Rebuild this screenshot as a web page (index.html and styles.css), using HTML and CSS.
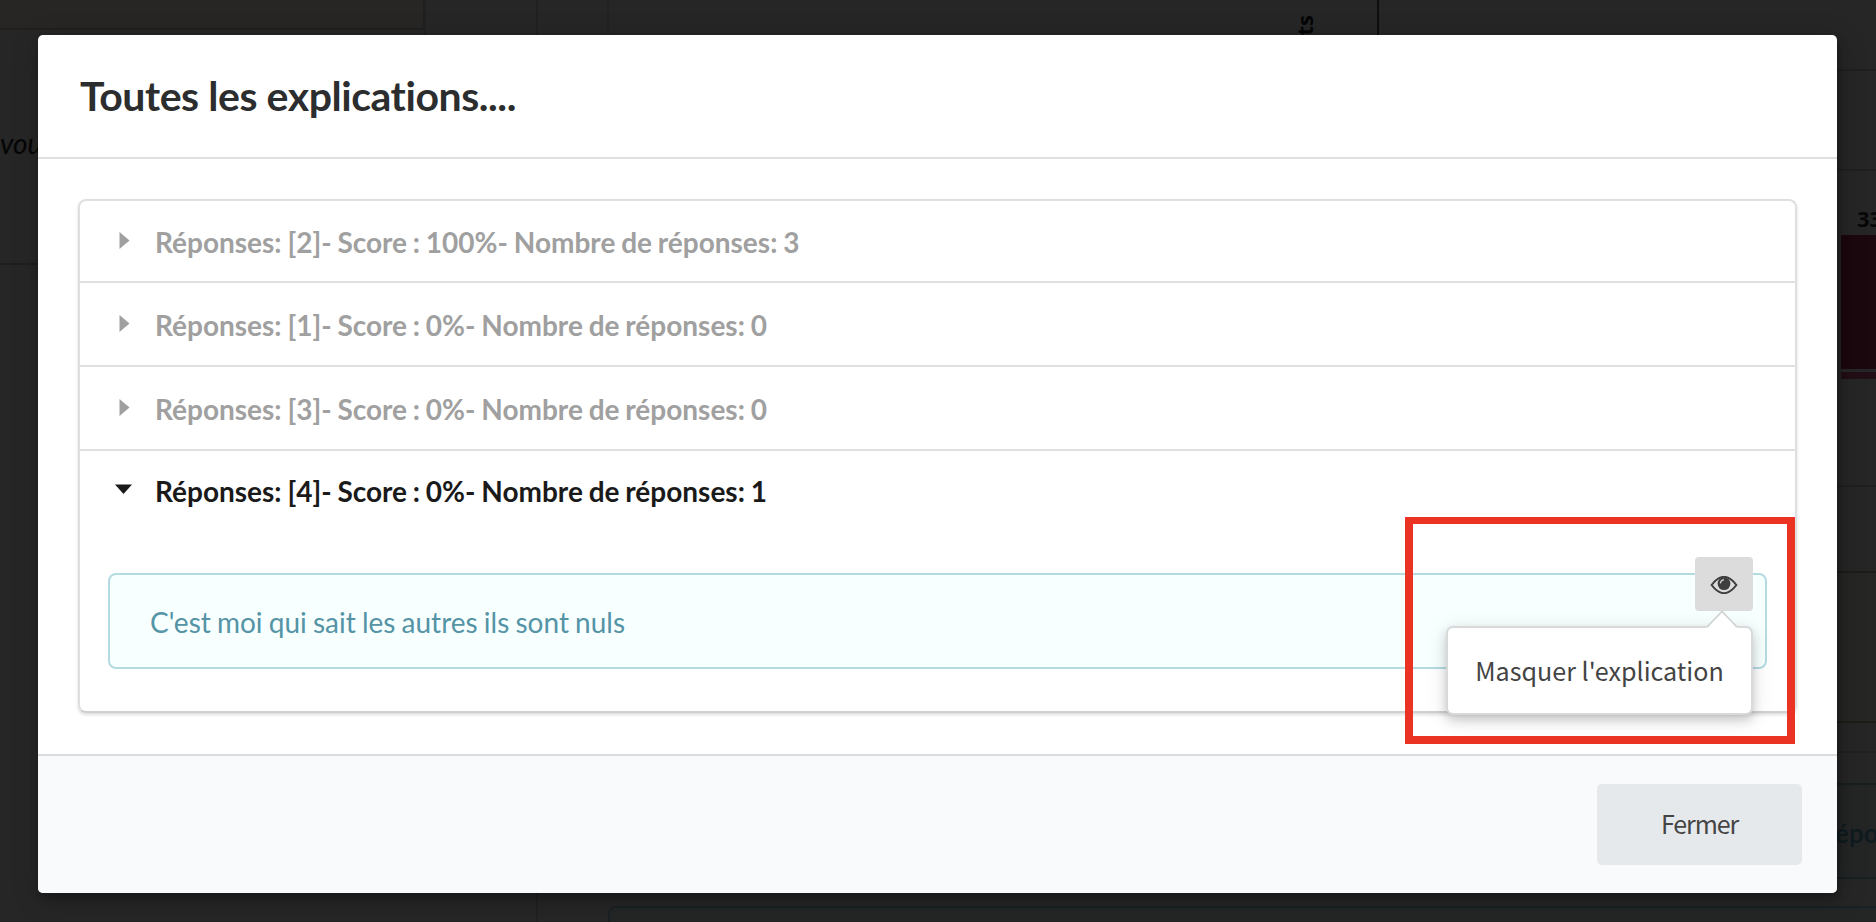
FILE: index.html
```html
<!DOCTYPE html>
<html lang="fr">
<head>
<meta charset="utf-8">
<title>Toutes les explications</title>
<link rel="stylesheet" href="styles.css">
</head>
<body>
<div class="page" aria-hidden="true">
  <div class="bg banner"></div>
  <div class="bg rule-left"></div>
  <div class="bg vline v1"></div>
  <div class="bg vline v2"></div>
  <div class="bg vline v3"></div>
  <div class="bg vline axis"></div>
  <div class="bg card-bottom"></div>
  <div class="bg rline r1"></div>
  <div class="bg rline r2"></div>
  <div class="bg rline r3"></div>
  <div class="bg warm"></div>
  <div class="bg rline r4"></div>
  <div class="bg cool"></div>
  <div class="bg bar"></div>
  <div class="bg bar-base"></div>
  <span class="bg word-left">vous</span>
  <span class="bg word-axis">ts</span>
  <span class="bg word-value">33</span>
  <span class="bg word-right">épo</span>
</div>
<div class="modal" role="dialog">
  <header class="header"><h1 class="title">Toutes les explications....</h1></header>
  <main class="content">
    <div class="accordion">
      <div class="row"><svg class="caret" viewBox="0 0 16 18"><path d="M3.5 1 L13.5 9.5 L3.5 18Z"/></svg><span>Réponses: [2]- Score : 100%- Nombre de réponses: 3</span></div>
      <div class="row"><svg class="caret" viewBox="0 0 16 18"><path d="M3.5 1 L13.5 9.5 L3.5 18Z"/></svg><span>Réponses: [1]- Score : 0%- Nombre de réponses: 0</span></div>
      <div class="row"><svg class="caret" viewBox="0 0 16 18"><path d="M3.5 1 L13.5 9.5 L3.5 18Z"/></svg><span>Réponses: [3]- Score : 0%- Nombre de réponses: 0</span></div>
      <div class="row active"><svg class="caret" viewBox="0 0 16 18"><path d="M-1 4.5 H16 L7.5 14Z"/></svg><span>Réponses: [4]- Score : 0%- Nombre de réponses: 1</span></div>
      <div class="message"><span class="message-text">C'est moi qui sait les autres ils sont nuls</span>
        <button class="eye"><svg viewBox="0 0 28 18"><path d="M1.6 9 Q14 -7.4 26.4 9 Q14 25.4 1.6 9Z" fill="none" stroke="#3f3f3f" stroke-width="2"/><circle cx="14" cy="7.6" r="6.4" fill="#3f3f3f"/><path d="M10.4 7.4 Q10.6 4 14 3.8" fill="none" stroke="#ddd" stroke-width="1.3"/></svg></button>
        <div class="popup">Masquer l'explication<svg class="arrow" viewBox="0 0 32 18"><path d="M0 17.5 H2 L16 2 L30 17.5 H32 V18 H0Z" fill="#fff"/><path d="M1 17 L16 1.5 L31 17" fill="none" stroke="#d0d2d2" stroke-width="1.6"/></svg></div>
      </div>
    </div>
  </main>
  <footer class="footer"><button class="close">Fermer</button></footer>
</div>
<div class="highlight"></div>
</body>
</html>
```
FILE: styles.css
```css
* { box-sizing: border-box; }
body { margin: 0; width: 1876px; height: 922px; overflow: hidden; background: #262626; font-family: Lato, sans-serif; font-variant-ligatures: none; padding: 34.5px 39px 0 38px; }
.page { position: absolute; inset: 0; overflow: hidden; }
.bg { position: absolute; }
.banner { left: 0; top: 0; width: 425px; height: 30px; background: #272624; border-right: 2px solid #202020; border-bottom: 2px solid #202020; }
.rule-left { left: 0; top: 263px; width: 40px; height: 2px; background: #1f1f1f; }
.vline { width: 2px; background: #212121; }
.v1 { left: 424px; top: 0; height: 36px; }
.v2 { left: 536px; top: 0; height: 922px; }
.v3 { left: 607px; top: 0; height: 36px; }
.axis { left: 1377px; top: 0; height: 36px; background: #0e0e0e; }
.card-bottom { left: 608px; top: 906px; width: 1300px; height: 40px; border: 2px solid #192124; border-radius: 8px; background: #242626; }
.rline { left: 1836px; width: 40px; height: 2px; background: #202020; }
.r1 { top: 69px; }
.r2 { top: 169px; }
.r3 { top: 485px; }
.r4 { top: 751px; }
.warm { left: 1836px; top: 571px; width: 40px; height: 152px; background: #262624; border: solid #1c1c19; border-width: 2px 0; }
.cool { left: 1836px; top: 783px; width: 40px; height: 96px; background: #242626; border: solid #182022; border-width: 2px 0; }
.bar { left: 1841px; top: 235px; width: 35px; height: 134px; background: #1b070e; }
.bar-base { left: 1841px; top: 372px; width: 35px; height: 7px; background: #220e16; }
.word-left { left: 0; top: 127px; font-size: 28px; font-style: italic; line-height: 32px; color: #050505; }
.word-axis { left: 1291px; top: 15px; font: bold 22px/26px "Open Sans", sans-serif; color: #050505; writing-mode: vertical-rl; transform: rotate(180deg); }
.word-value { left: 1857px; top: 204px; font: bold 22px/28px "Open Sans", sans-serif; color: #080808; }
.word-right { left: 1835px; top: 817px; font-size: 26px; font-weight: 700; line-height: 32px; color: #101b1f; }

.modal { position: relative; width: 1799px; height: 858px; display: flex; flex-direction: column; background: #fff; border-radius: 5px; box-shadow: 2px 6px 8px rgba(0,0,0,.25), 2px 6px 30px rgba(0,0,0,.2); }
.header { height: 124px; border-bottom: 2px solid #dfdfdf; padding: 36.5px 42px 0; }
.title { margin: 0; font-size: 41px; line-height: 50px; font-weight: 700; letter-spacing: -0.44px; color: #2c2d2e; white-space: nowrap; }
.content { flex: 1; padding: 40px 40px 0; }
.accordion { height: 514px; border: 2px solid #dfdfdf; border-radius: 8px; box-shadow: 0 2px 3px rgba(34,36,38,.15); border-bottom-color: #cfcfcf; }
.row { height: 84px; display: flex; align-items: center; gap: 23px; padding: 2px 36px 0; border-bottom: 2px solid #dfdfdf; font-size: 28px; word-spacing: -1px; font-weight: 700; color: #a0a0a0; white-space: nowrap; }
.row:first-child { height: 82px; padding-top: 3px; }
.caret { width: 16px; height: 18px; margin-top: -4px; fill: currentColor; overflow: visible; }
.row.active { color: #1a1a1a; border: 0; height: 78px; }
.message { position: relative; margin: 44px 28px 0; height: 96px; padding: 3px 40px 0; display: flex; align-items: center; border: 2px solid #b3dbe1; border-radius: 8px; background: #f8ffff; color: #5494a6; font-size: 28px; word-spacing: -1px; white-space: nowrap; }
.eye { position: absolute; right: 12px; top: -18px; width: 58px; height: 54px; border: 0; border-radius: 4px; background: #dcdcdc; padding: 2px 0 0; display: grid; place-items: center; }
.eye svg { width: 28px; height: 18px; }
.popup { position: absolute; right: 12px; top: 51px; width: 307px; height: 89px; display: grid; place-items: center; background: #fff; border: 2px solid #d8dada; border-radius: 7px; box-shadow: 0 5px 10px rgba(34,36,38,.18), 0 4px 22px rgba(34,36,38,.12); font: 25.1px/36px "Noto Sans CJK SC", sans-serif; word-spacing: 0; color: #444; }
.arrow { position: absolute; right: 13px; top: -18px; width: 32px; height: 18px; }
.footer { height: 139px; padding: 28px 35px 0; display: flex; justify-content: flex-end; align-items: flex-start; background: #f9fafc; border-top: 2px solid #dadcdc; border-radius: 0 0 5px 5px; }
.close { width: 205px; height: 81px; border: 0; border-radius: 5px; background: #e6e9ec; color: #444; font: 25px/36px "Noto Sans CJK SC", sans-serif; letter-spacing: -1.1px; padding: 0 0 3px; }
.highlight { position: absolute; left: 1405px; top: 517px; width: 390px; height: 227px; border: 8px solid #ea3323; border-top-width: 7px; }
```
